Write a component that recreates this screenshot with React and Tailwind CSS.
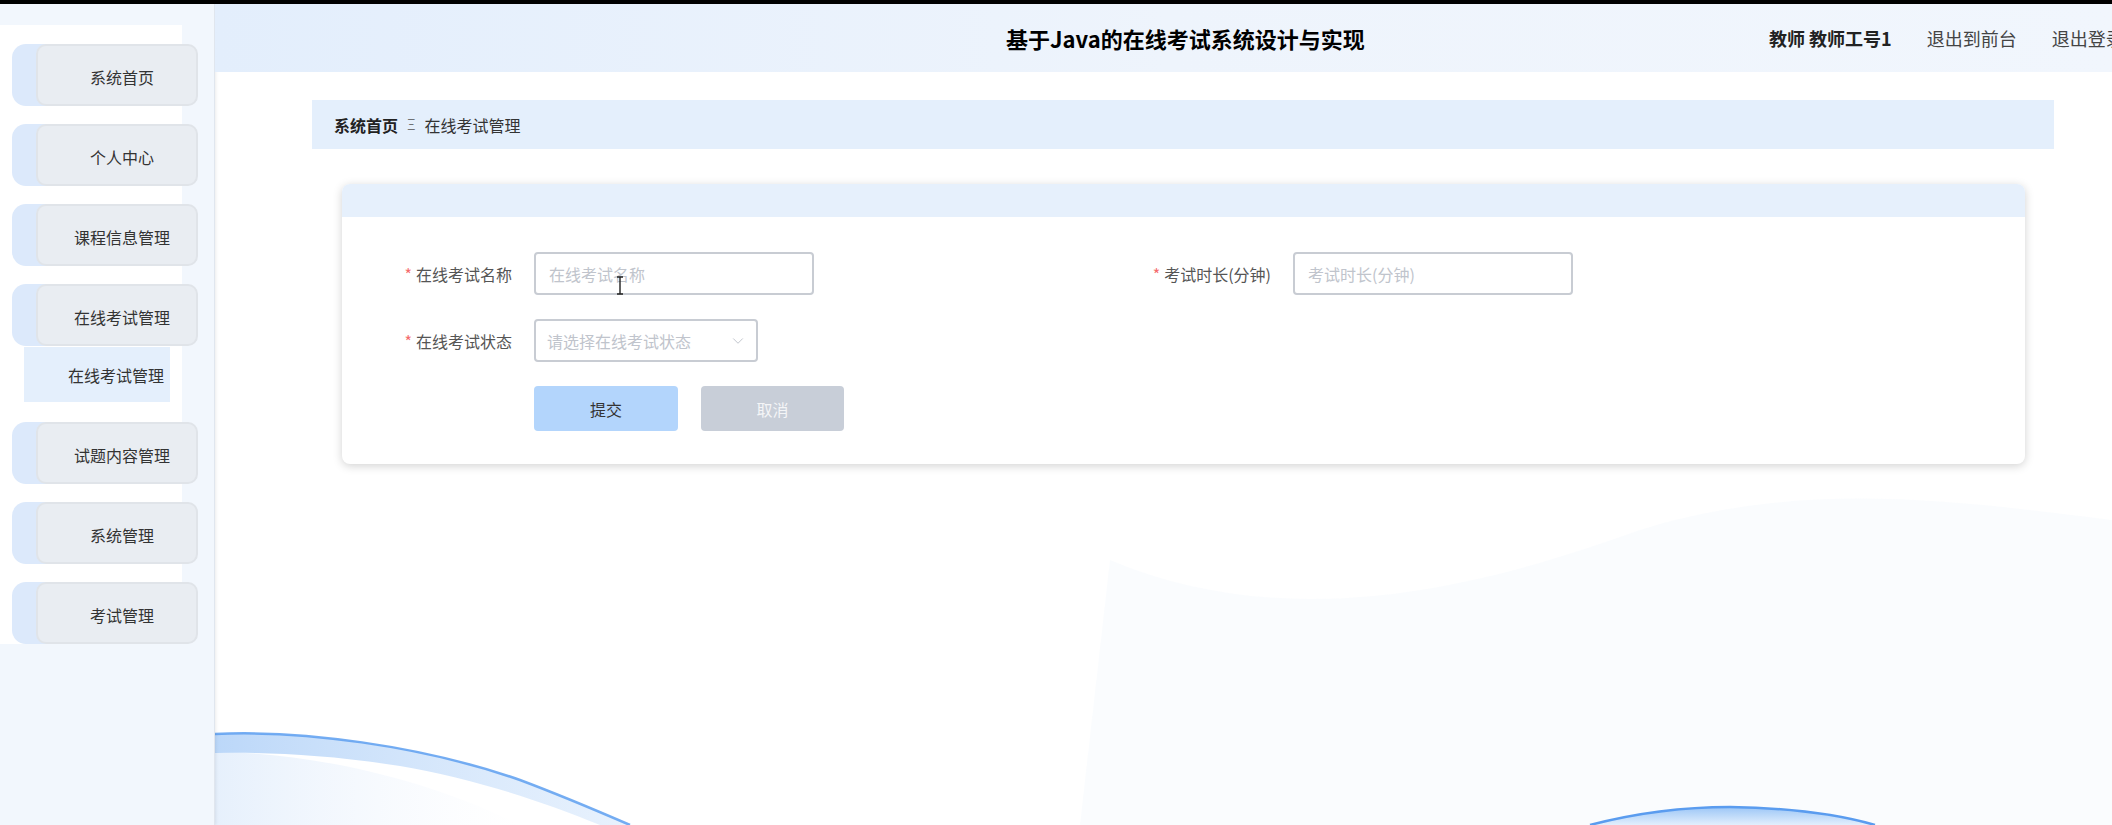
import { ChevronDown } from "lucide-react";

const menu = [
  { title: "系统首页" },
  { title: "个人中心" },
  { title: "课程信息管理" },
  { title: "在线考试管理", children: ["在线考试管理"] },
  { title: "试题内容管理" },
  { title: "系统管理" },
  { title: "考试管理" },
];

function MenuItem({ item, last }) {
  return (
    <div>
      <div className="ml-[12px] w-[186px] h-[62px] rounded-[14px] bg-[#dce9fb] pl-[24px]">
        <div className="h-full rounded-[10px] bg-[#e9edf2] border-2 border-[#e0e4e9] flex items-center justify-center pl-[10px] pt-[3px] text-[16px] text-[#333]">
          {item.title}
        </div>
      </div>
      {item.children ? (
        <div className="mt-px">
          {item.children.map((c) => (
            <div key={c} className="ml-[24px] w-[146px] h-[55px] bg-[#e4effc] flex items-center pl-[44px] text-[16px] text-[#333] whitespace-nowrap">
              {c}
            </div>
          ))}
          <div className="h-[20px]" />
        </div>
      ) : (
        !last && <div className="h-[18px]" />
      )}
    </div>
  );
}

function Field({ label, children }) {
  return (
    <div className="flex items-center">
      <label className="w-[170px] text-right text-[16px] text-[#555] whitespace-nowrap">
        <span className="text-[#f56c6c] mr-1">*</span>
        {label}
      </label>
      <div className="ml-[22px]">{children}</div>
    </div>
  );
}

export default function App() {
  return (
    <div className="w-[2112px] h-[825px] overflow-hidden bg-black font-['Noto_Sans_CJK_SC',sans-serif]">
      <div className="mt-[4px] h-[821px] flex relative bg-white">
        {/* background waves */}
        <svg className="absolute left-0 top-0 w-[2112px] h-[821px] pointer-events-none" viewBox="0 4 2112 821">
          <defs>
            <linearGradient id="rib" x1="0" y1="0" x2="1" y2="0">
              <stop offset="0" stopColor="#b4d3f8" stopOpacity="0.9" />
              <stop offset="1" stopColor="#d9e9fc" stopOpacity="0.6" />
            </linearGradient>
            <linearGradient id="under" x1="0" y1="0" x2="1" y2="0">
              <stop offset="0" stopColor="#e6f0fc" />
              <stop offset="1" stopColor="#f4f8fe" stopOpacity="0" />
            </linearGradient>
            <linearGradient id="bub" x1="0" y1="0" x2="0" y2="1">
              <stop offset="0" stopColor="#9cc6f6" />
              <stop offset="1" stopColor="#e2effd" />
            </linearGradient>
          </defs>
          <path d="M1080 825 L1110 560 C1300 640 1500 580 1640 530 C1800 480 1950 500 2112 520 L2112 825 Z" fill="#f5f8fc" opacity="0.45" />
          <path d="M215 752 C300 752 420 775 520 825 L215 825 Z" fill="url(#under)" />
          <path d="M215 734 C300 730 420 745 520 780 C560 795 600 812 630 825 L600 825 C540 800 470 778 400 766 C330 755 270 752 215 753 Z" fill="url(#rib)" />
          <path d="M215 734 C300 730 420 745 520 780 C560 795 600 812 630 825" fill="none" stroke="#5d9ff0" strokeWidth="2.5" opacity="0.85" />
          <path d="M1590 825 C1640 812 1690 807 1730 807 C1790 808 1840 815 1875 825 Z" fill="url(#bub)" />
          <path d="M1590 825 C1640 812 1690 807 1730 807 C1790 808 1840 815 1875 825" fill="none" stroke="#5a9cef" strokeWidth="2.5" />
        </svg>

        {/* sidebar */}
        <aside className="relative z-10 w-[215px] shrink-0 bg-[#f2f7fd] border-r border-[#e0e6ee] shadow-[1px_0_3px_rgba(0,0,0,0.08)] pt-[21px]">
          <div className="w-[182px] bg-white pt-[19px]">
            {menu.map((m, i) => (
              <MenuItem key={m.title} item={m} last={i === menu.length - 1} />
            ))}
          </div>
        </aside>

        {/* main */}
        <main className="relative z-10 flex-1 min-w-0">
          <header className="h-[68px] flex items-center bg-gradient-to-r from-[#e3eefc] via-[#eef4fc] to-[#f1f6fd] whitespace-nowrap">
            <div className="ml-[791px] w-[763px] shrink-0">
              <h1 className="text-[22px] font-bold text-black">基于Java的在线考试系统设计与实现</h1>
            </div>
            <div className="flex items-center gap-[35px] text-[18px]">
              <span className="font-bold text-[#222]">教师 教师工号1</span>
              <span className="text-[#444]">退出到前台</span>
              <span className="text-[#444]">退出登录</span>
            </div>
          </header>

          <div className="mt-[28px] ml-[97px] mr-[58px] h-[49px] bg-[#e4effc] flex items-center pl-[22px] text-[16px]">
            <span className="font-bold text-[#222]">系统首页</span>
            <span className="mx-[9px] text-[15px] text-[#555] font-light">Ξ</span>
            <span className="text-[#333]">在线考试管理</span>
          </div>

          <div className="mt-[35px] ml-[127px] w-[1683px] rounded-[8px] bg-white shadow-[0_2px_10px_rgba(0,0,0,0.18)] overflow-hidden">
            <div className="h-[33px] bg-[#e6f0fc]" />
            <div className="pt-[35px] pb-[33px] flex flex-col gap-[24px]">
              <div className="flex">
                <div className="w-[759px]">
                  <Field label="在线考试名称">
                    <div className="relative w-[280px] h-[43px] rounded-[4px] border-2 border-[#c8ccd3] flex items-center px-[13px] text-[16px] text-[#c0c4cc]">
                      在线考试名称
                      <svg className="absolute left-[80px] top-[22px]" width="8" height="19" viewBox="0 0 8 19">
                        <path d="M1 1h6M4 1v17M1 18h6" stroke="#222" strokeWidth="1.4" fill="none" />
                      </svg>
                    </div>
                  </Field>
                </div>
                <Field label="考试时长(分钟)">
                  <div className="w-[280px] h-[43px] rounded-[4px] border-2 border-[#c8ccd3] flex items-center px-[13px] text-[16px] text-[#c0c4cc]">
                    考试时长(分钟)
                  </div>
                </Field>
              </div>

              <Field label="在线考试状态">
                <div className="w-[224px] h-[43px] rounded-[4px] border-2 border-[#c8ccd3] flex items-center justify-between pl-[11px] pr-[9px] text-[16px] text-[#c0c4cc]">
                  请选择在线考试状态
                  <ChevronDown size={18} strokeWidth={1.3} className="text-[#c0c4cc]" />
                </div>
              </Field>

              <div className="flex ml-[192px] gap-[23px]">
                <button className="w-[144px] h-[45px] rounded-[4px] bg-[#b3d5fc] text-[16px] text-[#333]">提交</button>
                <button className="w-[143px] h-[45px] rounded-[4px] bg-[#c8ced8] text-[16px] text-[#f4f5f7]">取消</button>
              </div>
            </div>
          </div>
        </main>
      </div>
    </div>
  );
}
